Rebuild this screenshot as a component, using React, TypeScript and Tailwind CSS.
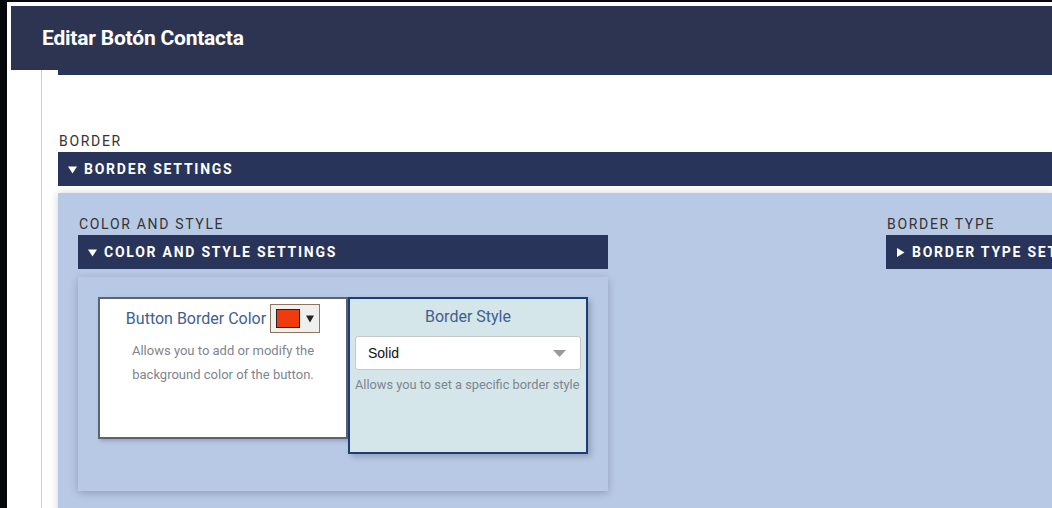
// Edit button modal — border settings panel

const label = "text-[14px] tracking-[0.12em] text-[#333] uppercase leading-none";
const bar =
  "h-[34px] bg-[#283459] flex items-center gap-[7px] pl-[10px] text-white font-bold text-[14px] tracking-[0.125em] uppercase whitespace-nowrap overflow-hidden";

function Caret({ open }: { open: boolean }) {
  return (
    <svg width="9" height="9" viewBox="0 0 9 9" className="shrink-0">
      {open ? <path d="M0 1.5h9L4.5 8.5z" fill="#fff" /> : <path d="M1 0v9l7.5-4.5z" fill="#fff" />}
    </svg>
  );
}

function ColorCard() {
  return (
    <div className="w-[250px] h-[142px] shrink-0 bg-white border-[2px] border-[#5d6470] shadow-[2px_2px_4px_rgba(0,0,0,0.2)] flex flex-col items-center pt-[5px]">
      <div className="flex items-center gap-[4px]">
        <span className="text-[16px] text-[#40608f]">Button Border Color</span>
        <button className="w-[50px] h-[29px] bg-[#efefef] border border-[#8d7560] flex items-center pl-[5px] gap-[6px]">
          <span className="w-[24px] h-[19px] bg-[#f03c0c] border border-[#222]" />
          <svg width="8" height="8" viewBox="0 0 8 8">
            <path d="M0 0.5h8L4 7.5z" fill="#222" />
          </svg>
        </button>
      </div>
      <p className="mt-[6px] text-[13px] leading-[24px] text-[#80858f] text-center">
        Allows you to add or modify the
        <br />
        background color of the button.
      </p>
    </div>
  );
}

function StyleCard() {
  return (
    <div className="w-[240px] h-[157px] shrink-0 bg-[#d4e6ea] border-[2px] border-[#1c3c7c] shadow-[3px_3px_6px_rgba(0,0,0,0.2)] flex flex-col px-[5px] pt-[8px]">
      <div className="text-center text-[16px] leading-[20px] text-[#40608f]">Border Style</div>
      <div className="mt-[9px] h-[34px] bg-white border border-[#c8c8c8] rounded-[3px] flex items-center justify-between pl-[12px] pr-[14px]">
        <span className="text-[14px] text-[#111] font-['Liberation_Sans',Arial,sans-serif]">Solid</span>
        <svg width="13" height="7" viewBox="0 0 13 7">
          <path d="M0 0h13L6.5 7z" fill="#999" />
        </svg>
      </div>
      <p className="mt-[6px] text-[12.8px] leading-[18px] text-[#80858f] whitespace-nowrap">
        Allows you to set a specific border style
      </p>
    </div>
  );
}

export default function App() {
  return (
    <div className="w-[1052px] h-[508px] overflow-hidden bg-[#06070a] pl-[7px] pt-[2px] font-['Roboto','Noto_Sans',sans-serif]">
      <div className="h-full bg-white pt-[4px] pl-[4px]">
        {/* Header */}
        <div className="h-[64px] bg-[#2d3452] flex items-center pl-[31px]">
          <h1 className="text-white font-bold text-[21px] tracking-[-0.01em] pt-[2px]">Editar Botón Contacta</h1>
        </div>

        {/* Body */}
        <div className="ml-[30px] h-full border-l border-[#cfcfcf] pl-[16px]">
          <div className="h-[5px] bg-[#283459]" />

          <div className="pt-[59px]">
            <div className={label + " pl-[1px]"}>Border</div>
            <div className={bar + " mt-[4px]"}>
              <Caret open />
              <span>Border Settings</span>
            </div>

            <div className="mt-[7px] bg-[#b8c9e6] shadow-[0_0_8px_rgba(0,0,0,0.18)] pl-[20px] pt-[24px] pb-[40px] flex gap-[278px]">
              {/* Color and style */}
              <div className="w-[530px] shrink-0">
                <div className={label + " pl-[1px]"}>Color and Style</div>
                <div className={bar + " mt-[4px]"}>
                  <Caret open />
                  <span>Color and Style Settings</span>
                </div>
                <div className="mt-[8px] h-[214px] bg-[#b8c9e6] shadow-[0_2px_8px_rgba(0,0,0,0.22)] p-[20px] flex items-start">
                  <ColorCard />
                  <StyleCard />
                </div>
              </div>

              {/* Border type */}
              <div className="w-[530px] shrink-0">
                <div className={label + " pl-[1px]"}>Border Type</div>
                <div className={bar + " mt-[4px]"}>
                  <Caret open={false} />
                  <span>Border Type Settings</span>
                </div>
              </div>
            </div>
          </div>
        </div>
      </div>
    </div>
  );
}
